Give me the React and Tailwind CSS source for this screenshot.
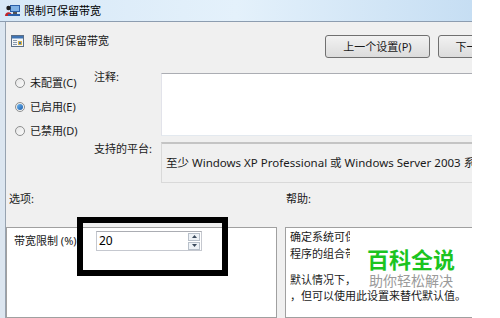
import React from "react";

const font = { fontFamily: '"Noto Sans", "Noto Sans CJK SC", sans-serif' };
const cjk = { fontFamily: '"Noto Sans CJK SC", sans-serif' };

const TitleIcon = () => (
  <svg width="16" height="13" viewBox="0 0 16 13">
    <rect x="5" y="1" width="10" height="7" fill="#2b5fa8" />
    <rect x="6" y="2" width="8" height="5" fill="#7fb2e6" />
    <rect x="8" y="8" width="4" height="2" fill="#555" />
    <circle cx="3.5" cy="4" r="2.2" fill="#1d1d1d" />
    <path d="M0 12 C0 7 7 7 7 12 Z" fill="#c0262c" />
    <rect x="3" y="10" width="12" height="2" fill="#2b5fa8" />
  </svg>
);

const PolicyIcon = () => (
  <svg width="13" height="12" viewBox="0 0 13 12">
    <rect x="0.5" y="0.5" width="12" height="11" fill="#f4f6f8" stroke="#5c6f86" />
    <rect x="1" y="1" width="11" height="2.5" fill="#3f74b3" />
    <rect x="2" y="5" width="4" height="1" fill="#8a99ab" />
    <rect x="2" y="7" width="4" height="1" fill="#8a99ab" />
    <rect x="2" y="9" width="4" height="1" fill="#8a99ab" />
    <rect x="7" y="6" width="4" height="4" fill="#d9b44a" />
    <rect x="8" y="7" width="2" height="2" fill="#3f74b3" />
  </svg>
);

const Radio = ({ checked, label }) => (
  <div className="flex items-center h-[24px]">
    <span className="w-[10px] h-[10px] rounded-full border border-[#8e8f8f] bg-gradient-to-br from-[#e6e6e6] to-[#fbfbfb] flex items-center justify-center">
      {checked && (
        <span className="w-[6px] h-[6px] rounded-full bg-gradient-to-br from-[#6fb7ef] to-[#1b5fae]" />
      )}
    </span>
    <span className="ml-[5px] text-[11px] leading-[12px] text-[#1a1a1a]">{label}</span>
  </div>
);

const NavButton = ({ children }) => (
  <button className="w-[105px] h-[23px] shrink-0 rounded-[3px] border border-[#707070] bg-gradient-to-b from-[#f2f2f2] to-[#dcdcdc] text-[11px] leading-[12px] text-[#1a1a1a]">
    {children}
  </button>
);

export default function App() {
  return (
    <div className="relative w-[500px] h-[318px] bg-white overflow-hidden" style={font}>
      <div className="w-[472px] h-full overflow-hidden flex flex-col">
        {/* title bar */}
        <div className="h-[22px] shrink-0 flex items-center pl-[5px] border-b border-[#8d9db0] bg-gradient-to-r from-[#d7e8f7] via-[#e4f1fb] to-[#c6def3]">
          <TitleIcon />
          <span className="ml-[3px] text-[11px] leading-[12px] text-black whitespace-nowrap">限制可保留带宽</span>
        </div>

        <div className="flex flex-1 min-h-0">
          {/* window frame */}
          <div className="w-[6px] shrink-0 bg-[#dce6f0] border-r border-[#97a3b0]" />

          <div className="w-[600px] shrink-0 bg-[#f0f0f0] flex flex-col">
            {/* header */}
            <div className="h-[49px] shrink-0 flex items-start pt-[13px]">
              <div className="w-[319px] shrink-0 flex items-center pl-[5px]">
                <PolicyIcon />
                <span className="ml-[8px] text-[11px] leading-[12px] text-[#1a1a1a] whitespace-nowrap">限制可保留带宽</span>
              </div>
              <div className="flex gap-[8px]">
                <NavButton>上一个设置(P)</NavButton>
                <NavButton>下一个设置(N)</NavButton>
              </div>
            </div>

            {/* state + comment + platform */}
            <div className="flex h-[112px] shrink-0">
              <div className="w-[88px] shrink-0 pl-[9px]">
                <Radio label="未配置(C)" />
                <Radio checked label="已启用(E)" />
                <Radio label="已禁用(D)" />
              </div>
              <div className="grid grid-cols-[67px_1fr] gap-y-[6px] content-start flex-1">
                <span className="text-[11px] leading-[12px] text-[#1a1a1a]">注释:</span>
                <div className="mt-[2px] h-[63px] bg-white border border-[#e2e3ea] border-t-[#abadb3] border-b-[#e3e9ef]" />
                <span className="mt-[1px] text-[11px] leading-[12px] text-[#1a1a1a] whitespace-nowrap">支持的平台:</span>
                <div className="h-[41px] bg-[#f0f0f0] border border-[#d9d9d9] border-t-2 border-t-[#c4c4c4] pl-[4px] pt-[5px]">
                  <span className="text-[11.5px] leading-[12px] text-[#1a1a1a] whitespace-nowrap">
                    至少 Windows XP Professional 或 Windows Server 2003 系统
                  </span>
                </div>
              </div>
            </div>

            {/* section labels */}
            <div className="h-[44px] shrink-0 flex pt-[10px]">
              <span className="w-[280px] pl-[3px] text-[11px] leading-[12px] text-[#1a1a1a]">选项:</span>
              <span className="text-[11px] leading-[12px] text-[#1a1a1a]">帮助:</span>
            </div>

            {/* options + help panels */}
            <div className="flex gap-[8px] flex-1">
              <div className="w-[271px] shrink-0 bg-white border border-[#a0a0a0] pt-[3px] pl-[7px]">
                <div className="flex items-center">
                  <span className="w-[82px] text-[11px] leading-[12px] text-[#1a1a1a] whitespace-nowrap">带宽限制 (%)</span>
                  <div className="w-[106px] h-[20px] flex items-center justify-between bg-white border border-[#c5c8cf] border-t-[#abadb3] pl-[2px] pr-[1px]">
                    <span className="text-[12px] leading-[12px] text-black">20</span>
                    <div className="flex flex-col gap-[1px]">
                      <span className="w-[12px] h-[8px] border border-[#b8c0ca] bg-[#eef2f6] flex items-center justify-center">
                        <svg width="5" height="3" viewBox="0 0 5 3"><path d="M0 3 L2.5 0 L5 3 Z" fill="#3b4a5c" /></svg>
                      </span>
                      <span className="w-[12px] h-[8px] border border-[#b8c0ca] bg-[#eef2f6] flex items-center justify-center">
                        <svg width="5" height="3" viewBox="0 0 5 3"><path d="M0 0 L5 0 L2.5 3 Z" fill="#3b4a5c" /></svg>
                      </span>
                    </div>
                  </div>
                </div>
              </div>
              <div className="flex-1 bg-white border border-[#a0a0a0] pl-[4px] text-[11px] leading-[17px] text-[#1a1a1a] whitespace-nowrap">
                <p>
                  确定系统可保留的连接带宽百分比。此值限制所有在系统上运行的
                  <br />
                  程序的组合带宽保留。
                </p>
                <p className="mt-[10px] leading-[16px]">
                  默认情况下，数据包计划程序将系统限制为连接带宽的 20%
                  <br />
                  ，但可以使用此设置来替代默认值。
                </p>
              </div>
            </div>
          </div>
        </div>
      </div>

      {/* annotation box drawn over the screenshot */}
      <div className="absolute left-[77px] top-[217px] w-[151px] h-[59px] border-[6px] border-black" />

      {/* watermark */}
      <div className="absolute left-[350px] top-[230px] w-[122px] h-[59px] bg-white flex flex-col items-center pt-[17px]">
        <span className="text-[22px] leading-[22px] text-[#1cc41f] font-semibold whitespace-nowrap" style={cjk}>
          百科全说
        </span>
        <span className="mt-[4px] text-[14px] leading-[14px] text-[#9a9a9a] whitespace-nowrap" style={cjk}>
          助你轻松解决
        </span>
      </div>
    </div>
  );
}
